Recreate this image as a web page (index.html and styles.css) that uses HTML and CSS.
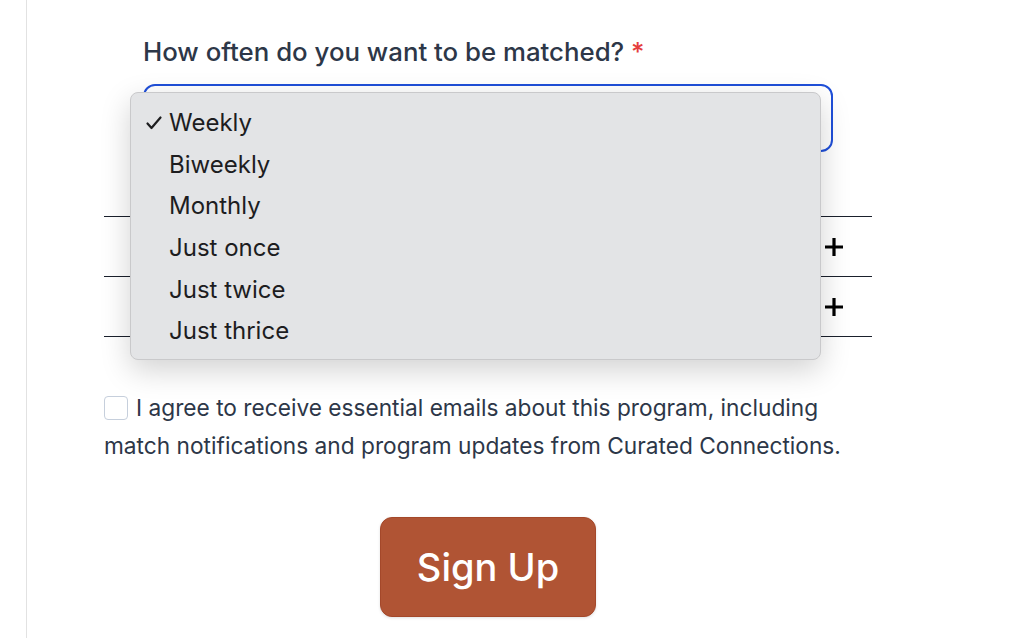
FILE: index.html
```html
<!DOCTYPE html>
<html lang="en">
<head>
<meta charset="utf-8">
<title>Sign up</title>
<link rel="stylesheet" href="styles.css">
</head>
<body>
<div class="page">
  <div class="panel">
    <form class="form">
      <div class="field">
        <div class="label">How often do you want to be matched? <span class="req">*</span></div>
        <div class="select-wrap">
          <div class="select"></div>
          <ul class="menu">
            <li class="opt selected"><span class="check"><svg width="16" height="16" viewBox="0 0 16 16"><path d="M1.5 8.5 L5.5 13 L14.5 2.5" fill="none" stroke="#1d1d1f" stroke-width="2.2" stroke-linecap="round" stroke-linejoin="round"/></svg></span>Weekly</li>
            <li class="opt"><span class="check"></span>Biweekly</li>
            <li class="opt"><span class="check"></span>Monthly</li>
            <li class="opt"><span class="check"></span>Just once</li>
            <li class="opt"><span class="check"></span>Just twice</li>
            <li class="opt"><span class="check"></span>Just thrice</li>
          </ul>
        </div>
      </div>
      <div class="accordion">
        <div class="acc-row"><span class="acc-title"></span><svg class="plus" width="20" height="20" viewBox="0 0 20 20"><path d="M10 1 V19 M1 10 H19" stroke="#000" stroke-width="3.2"/></svg></div>
        <div class="acc-row"><span class="acc-title"></span><svg class="plus" width="20" height="20" viewBox="0 0 20 20"><path d="M10 1 V19 M1 10 H19" stroke="#000" stroke-width="3.2"/></svg></div>
      </div>
      <div class="consent">
        <span class="box"></span>I agree to receive essential emails about this program, including match notifications and program updates from Curated Connections.
      </div>
      <div class="actions">
        <button type="button" class="btn">Sign Up</button>
      </div>
    </form>
  </div>
</div>
</body>
</html>
```

FILE: styles.css
```css
html, body {
  margin: 0;
  padding: 0;
  background: #ffffff;
  font-family: Inter, "Noto Sans", sans-serif;
}
.page {
  height: 638px;
  overflow: hidden;
  padding-left: 26px;
}
.panel {
  border-left: 1px solid #e2e2e2;
  height: 100%;
  padding-left: 77px;
}
.form {
  width: 768px;
}
.field {
  padding: 35px 39px 0;
}
.label {
  font-size: 25.8px;
  font-weight: 500;
  color: #2d3748;
  line-height: 34px;
}
.req {
  color: #e53e3e;
}
.select-wrap {
  position: relative;
  margin-top: 15px;
}
.select {
  height: 64px;
  border: 2px solid #1f4fd9;
  border-radius: 12px;
  background: #fff;
}
.menu {
  position: absolute;
  left: -13px;
  top: 8px;
  width: 689px;
  margin: 0;
  padding: 9px 0 7px;
  list-style: none;
  background: #e3e4e6;
  border: 1px solid #c9c9cb;
  border-radius: 8px;
  box-shadow: 0 10px 30px rgba(0,0,0,0.18);
  z-index: 2;
}
.opt {
  display: flex;
  align-items: center;
  height: 41.6px;
  font-size: 24px;
  color: #1d1d1f;
}
.check {
  width: 38px;
  height: 16px;
  display: flex;
  justify-content: flex-end;
  padding-right: 7px;
  box-sizing: border-box;
}
.accordion {
  margin-top: 64px;
  border-top: 1px solid #1a202c;
}
.acc-row {
  height: 59px;
  border-bottom: 1px solid #1a202c;
  display: flex;
  align-items: center;
  justify-content: flex-end;
  padding-right: 28px;
}
.consent {
  margin-top: 52px;
  font-size: 22.7px;
  line-height: 38px;
  color: #2d3748;
}
.box {
  display: inline-block;
  width: 22px;
  height: 22px;
  border: 1.5px solid #c6cfdc;
  border-radius: 4px;
  vertical-align: -4px;
  margin-right: 8px;
  background: #fff;
}
.actions {
  display: flex;
  justify-content: center;
  margin-top: 52px;
}
.btn {
  width: 216px;
  height: 100px;
  background: #b05434;
  border: 1px solid #a4482a;
  border-radius: 12px;
  color: #fff;
  font-family: Inter, sans-serif;
  font-size: 38px;
  font-weight: 500;
  box-shadow: 0 1px 3px rgba(0,0,0,0.12);
}
```
